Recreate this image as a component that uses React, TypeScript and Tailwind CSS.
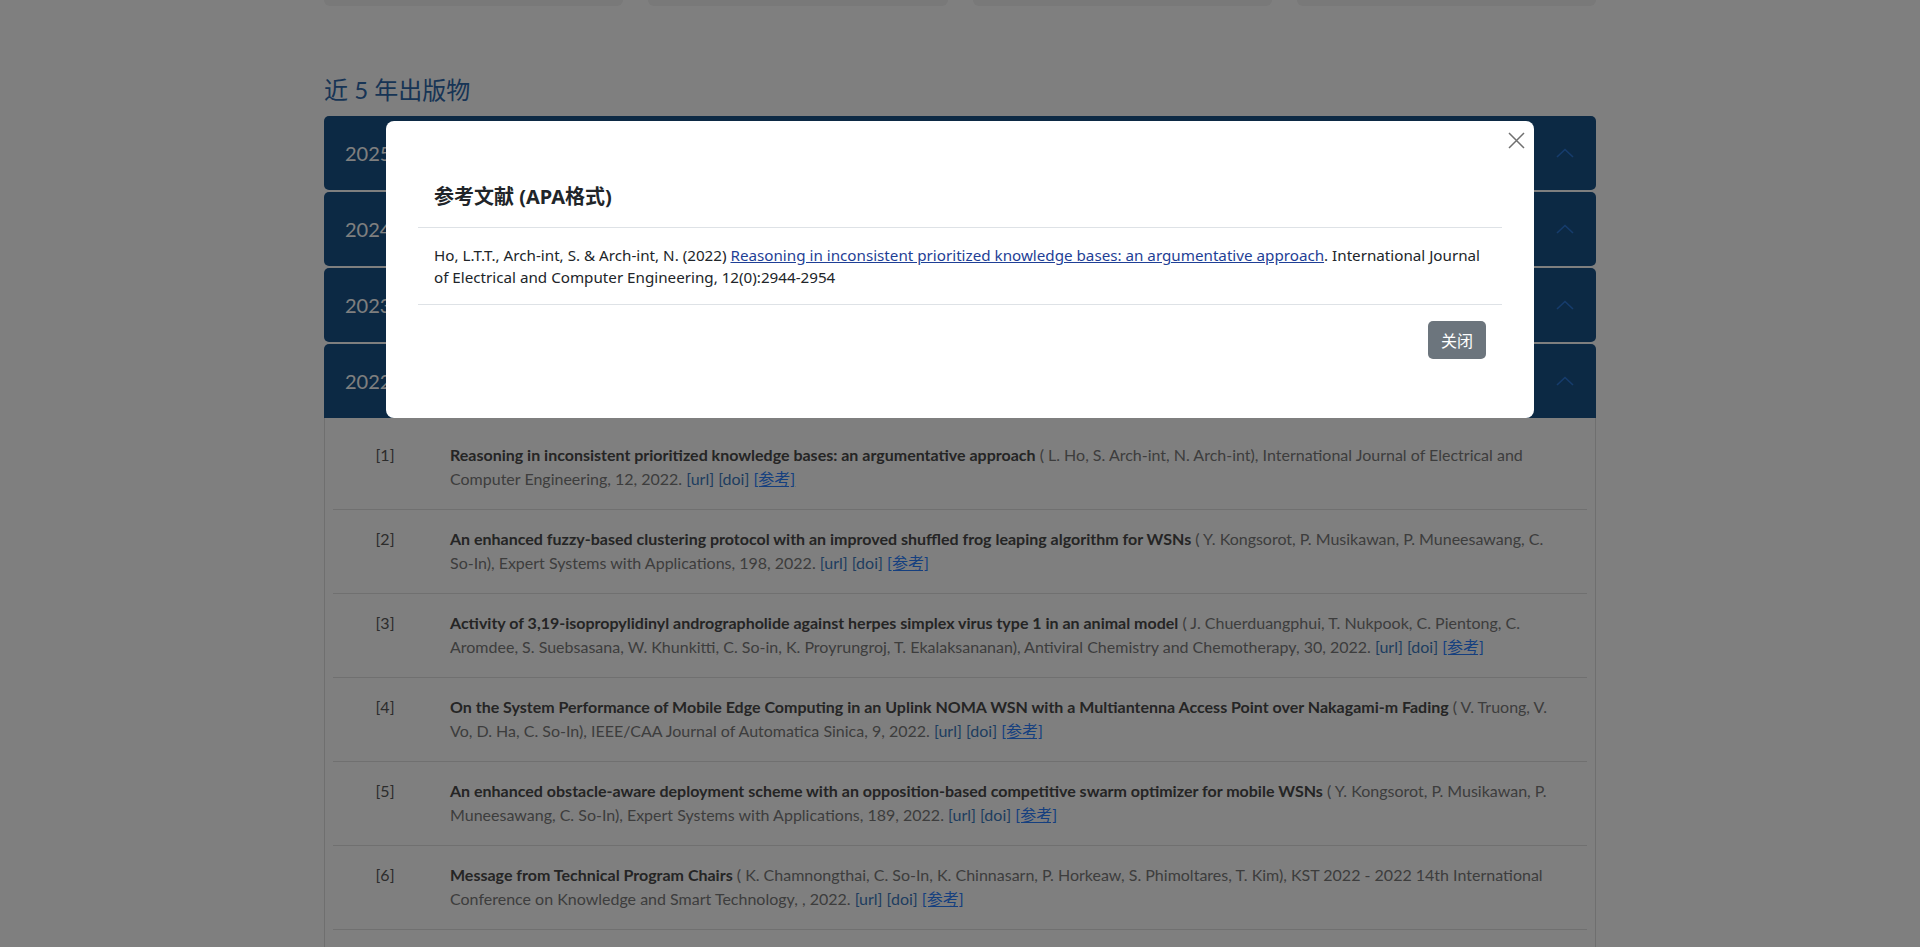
import React from "react";

type Pub = {
  title: string;
  rest: string;
};

const pubs: Pub[] = [
  {
    title: "Reasoning in inconsistent prioritized knowledge bases: an argumentative approach",
    rest: " ( L. Ho, S. Arch-int, N. Arch-int), International Journal of Electrical and Computer Engineering, 12, 2022.",
  },
  {
    title: "An enhanced fuzzy-based clustering protocol with an improved shuffled frog leaping algorithm for WSNs",
    rest: " ( Y. Kongsorot, P. Musikawan, P. Muneesawang, C. So-In), Expert Systems with Applications, 198, 2022.",
  },
  {
    title: "Activity of 3,19-isopropylidinyl andrographolide against herpes simplex virus type 1 in an animal model",
    rest: " ( J. Chuerduangphui, T. Nukpook, C. Pientong, C. Aromdee, S. Suebsasana, W. Khunkitti, C. So-in, K. Proyrungroj, T. Ekalaksananan), Antiviral Chemistry and Chemotherapy, 30, 2022.",
  },
  {
    title: "On the System Performance of Mobile Edge Computing in an Uplink NOMA WSN with a Multiantenna Access Point over Nakagami-m Fading",
    rest: " ( V. Truong, V. Vo, D. Ha, C. So-In), IEEE/CAA Journal of Automatica Sinica, 9, 2022.",
  },
  {
    title: "An enhanced obstacle-aware deployment scheme with an opposition-based competitive swarm optimizer for mobile WSNs",
    rest: " ( Y. Kongsorot, P. Musikawan, P. Muneesawang, C. So-In), Expert Systems with Applications, 189, 2022.",
  },
  {
    title: "Message from Technical Program Chairs",
    rest: " ( K. Chamnongthai, C. So-In, K. Chinnasarn, P. Horkeaw, S. Phimoltares, T. Kim), KST 2022 - 2022 14th International Conference on Knowledge and Smart Technology, , 2022.",
  },
  {
    title: "Deep Learning-Based Intrusion Detection Systems for Internet of Things Networks",
    rest: " ( P. Musikawan, C. So-In), IEEE Access, 10, 2022.",
  },
];

const years = ["2025", "2024", "2023", "2022"];

function Chevron() {
  return (
    <svg width="18" height="10" viewBox="0 0 18 10" fill="none">
      <path d="M1 9L9 1.5L17 9" stroke="#2c78d8" strokeWidth="1.6" />
    </svg>
  );
}

export default function App() {
  return (
    <div
      className="min-h-[947px] bg-white"
      style={{ fontFamily: "Lato, 'Noto Sans CJK SC', sans-serif" }}
    >
      <div className="mx-auto w-[1272px]">
        <div className="grid grid-cols-4 gap-[25px]">
          <div className="h-[6px] rounded-b-[6px] bg-[#f2f2f2]" />
          <div className="h-[6px] rounded-b-[6px] bg-[#f2f2f2]" />
          <div className="h-[6px] rounded-b-[6px] bg-[#f2f2f2]" />
          <div className="h-[6px] rounded-b-[6px] bg-[#f2f2f2]" />
        </div>

        <h2 className="mt-[69px] mb-[12px] text-[24px] leading-[29px] text-[#2f68aa]">
          近 5 年出版物
        </h2>

        <div className="flex flex-col gap-[2px]">
          {years.map((y, i) => (
            <div
              key={y}
              className={
                i === years.length - 1
                  ? "flex h-[74px] items-center justify-between rounded-t-[5px] bg-[#185288] pl-[21px] pr-[22px]"
                  : "flex h-[74px] items-center justify-between rounded-[5px] bg-[#185288] pl-[21px] pr-[22px]"
              }
            >
              <span className="text-[20px] text-white">{y}</span>
              <Chevron />
            </div>
          ))}
        </div>

        <div className="border border-t-0 border-[#dedede] px-2 pt-2">
          {pubs.map((p, i) => (
            <div key={i} className="flex border-b border-[#e0e0e0] pt-[17px] pb-[18px]">
              <div className="w-[104px] shrink-0 text-center text-[16px] leading-[24px] text-[#585858]">
                [{i + 1}]
              </div>
              <div className="ml-[13px] mr-[17px] text-[16px] leading-[24px] text-[#7a7a7a]">
                <span className="font-bold text-[#4a4a4a]">{p.title}</span>
                {p.rest}{" "}
                <span className="text-[#3c7ac0]">[url]</span>{" "}
                <span className="text-[#3c7ac0]">[doi]</span>{" "}
                <span className="text-[#2a7fff] underline">[参考]</span>
              </div>
            </div>
          ))}
        </div>
      </div>

      {/* backdrop */}
      <div className="fixed inset-0 z-40 bg-black/50" />

      {/* modal */}
      <div className="fixed inset-0 z-50 flex items-start justify-center pt-[121px]">
        <div className="relative w-[1148px] rounded-[8px] bg-white px-8 pt-[44px] pb-[59px] text-[#212529]">
          <button className="absolute top-[10px] right-[9px] flex h-[18px] w-[18px] items-center justify-center">
            <svg width="17" height="17" viewBox="0 0 17 17" fill="none">
              <path d="M1 1L16 16M16 1L1 16" stroke="#707070" strokeWidth="1.5" />
            </svg>
          </button>
          <div className="border-b border-[#dee2e6] px-4 pt-[17px] pb-[15px]">
            <h5
              className="text-[20px] font-bold leading-[30px] text-[#212529]"
              style={{ fontFamily: "'Noto Sans', 'Noto Sans CJK SC', sans-serif" }}
            >
              参考文献 (APA格式)
            </h5>
          </div>
          <div
            className="px-4 py-4 text-[15.2px] leading-[22px]"
            style={{ fontFamily: "'Noto Sans', 'Noto Sans CJK SC', sans-serif" }}
          >
            Ho, L.T.T., Arch-int, S. &amp; Arch-int, N. (2022){" "}
            <a className="text-[#1f3f96] underline">
              Reasoning in inconsistent prioritized knowledge bases: an argumentative approach
            </a>
            . International Journal of Electrical and Computer Engineering, 12(0):2944-2954
          </div>
          <div className="flex justify-end border-t border-[#dee2e6] px-4 pt-4">
            <button
              className="h-[38px] w-[58px] rounded-[5px] bg-[#6c757d] text-[16px] text-white"
              style={{ fontFamily: "'Noto Sans CJK SC', sans-serif" }}
            >
              关闭
            </button>
          </div>
        </div>
      </div>
    </div>
  );
}
